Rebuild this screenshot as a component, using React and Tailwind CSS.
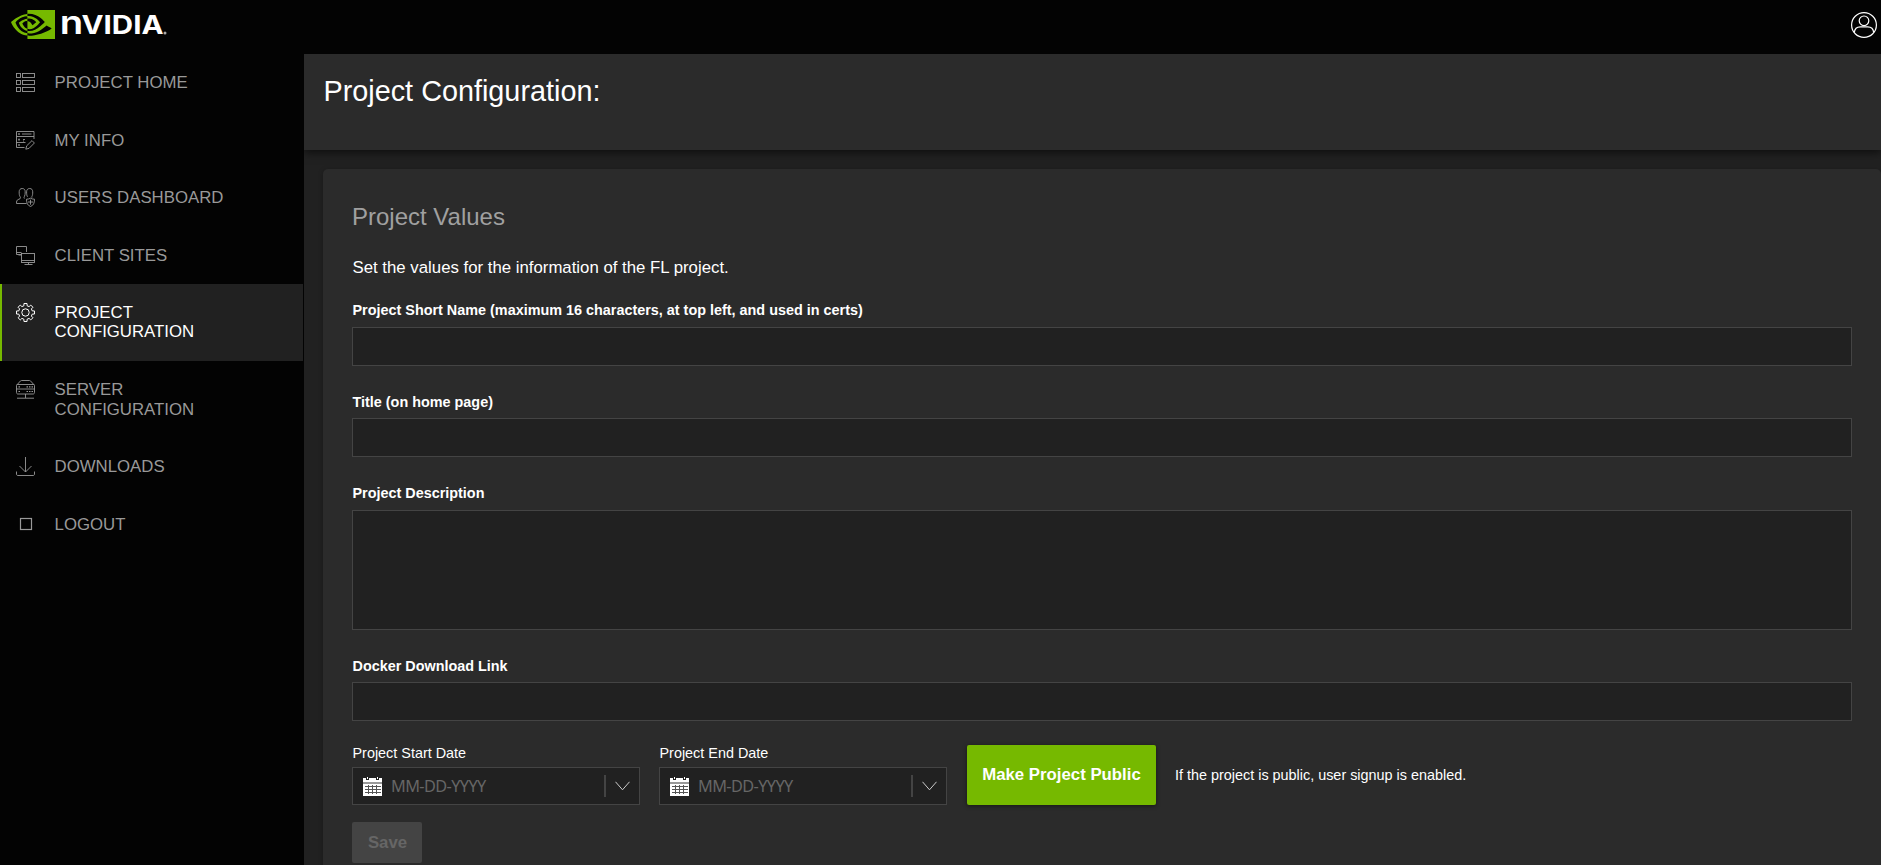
import React from "react";
import { SiNvidia } from "react-icons/si";

const iconBase = {
  width: 19,
  height: 19,
  viewBox: "0 0 19 19",
  fill: "none",
  stroke: "currentColor",
  strokeWidth: 0.9,
  className: "block shrink-0",
};

const HomeIcon = () => (
  <svg {...iconBase}>
    {[0.5, 7.5, 14.5].map((y) => (
      <g key={y}>
        <rect x="0.5" y={y} width="4" height="4" />
        <rect x="6.5" y={y} width="12" height="4" />
      </g>
    ))}
  </svg>
);

const InfoIcon = () => (
  <svg {...iconBase}>
    <path d="M8.5 16.5H.5V.5h17.5v7.500M.5 5.5H18M.5 11.5h9M6 3h9.5M7 8.5h2M7 10h1" />
    <path d="M3 2.2v1.6M3 7.8v1.6M3 13.2v1.6" strokeWidth="1.6" />
    <path d="M9.8 18.2l.9-3.4 5.3-5.2 2.4 2.4-5.3 5.3z" />
  </svg>
);

const UsersIcon = () => (
  <svg {...iconBase}>
    <path d="M10.5 15.5H.5c0-2.200.2-3.300 1.600-3.900l1.900-.9c.8-.5.5-1.400 0-2.100C3.200 7.500 3.200 5.700 3.200 3.800 3.200 1.700 4.300.5 6.200.5s3 1.200 3 3.300c0 1.900-.1 3.500-.8 4.700-.5.9-.5 1.600.1 2.100" />
    <path d="M11.500 8.800c-.8-1.200-.9-3-.9-5C10.600 1.700 11.800.5 13.700.5s3 1.200 3 3.300c0 1.900 0 3.300-.8 4.700v1.200" />
    <path d="M10.500 11.200c1.600 0 2.800-.3 4-1 1.200.7 2.400 1 4 1 0 3.800-.9 6.100-4 7.300-3.100-1.200-4-3.500-4-7.300zM14.500 11.700v5M12 14h5" />
  </svg>
);

const SitesIcon = () => (
  <svg {...iconBase}>
    <path d="M5.500 8.500h-5v-8h10v5.500M.5 6.500h5M2.500 9h3" />
    <rect x="5.500" y="7.500" width="13" height="9" />
    <path d="M5.500 14.500h13M12.500 16.500v2M8.500 18.500h8" />
  </svg>
);

const gearPoints = Array.from({ length: 8 }, (_, i) =>
  [
    [-0.24, 6.9],
    [-0.17, 9.1],
    [0.17, 9.1],
    [0.24, 6.9],
  ].map(([a, r]) => {
    const t = (i * Math.PI) / 4 + a;
    return `${(9.5 + r * Math.sin(t)).toFixed(2)},${(9.5 - r * Math.cos(t)).toFixed(2)}`;
  })
)
  .flat()
  .join(" ");

const GearIcon = () => (
  <svg {...iconBase} strokeWidth={1} strokeLinejoin="round">
    <polygon points={gearPoints} />
    <circle cx="9.500" cy="9.500" r="3.700" />
  </svg>
);

const ServerIcon = () => (
  <svg {...iconBase}>
    <path d="M.8 5L4.500.9c.3-.3.500-.4.900-.4h8.200c.4 0 .6.100.9.400L18.200 5" />
    <path d="M1.500 4.500h16c.6 0 1 .4 1 1v7c0 .8-.5 1.500-1.300 1.500H1.800C1 14 .5 13.300.5 12.500v-7c0-.6.4-1 1-1zM.5 9h18" />
    <path d="M2.500 6.800h1.500M10.500 6.800H12M13 6.800h1.500M15.500 6.800H17M2.500 11.500h1.500M10.500 11.500H12M13 11.500h1.500M15.500 11.500H17" strokeWidth="1.200" />
    <path d="M9.500 14v4M1 18.200h17" />
  </svg>
);

const DownloadIcon = () => (
  <svg {...iconBase}>
    <path d="M9.500 0v15M3.500 9l6 6 6-6M.5 14.500v2.500c0 1 .5 1.500 1.500 1.500h15c1 0 1.500-.5 1.500-1.500v-2.500" />
  </svg>
);

const LogoutIcon = () => (
  <svg {...iconBase}>
    <rect x="4.500" y="3.500" width="11" height="11" strokeWidth="1.200" />
  </svg>
);

const NAV = [
  { label: "PROJECT HOME", Icon: HomeIcon },
  { label: "MY INFO", Icon: InfoIcon },
  { label: "USERS DASHBOARD", Icon: UsersIcon },
  { label: "CLIENT SITES", Icon: SitesIcon },
  { label: "PROJECT CONFIGURATION", Icon: GearIcon, active: true },
  { label: "SERVER CONFIGURATION", Icon: ServerIcon },
  { label: "DOWNLOADS", Icon: DownloadIcon },
  { label: "LOGOUT", Icon: LogoutIcon },
];

function Logo() {
  return (
    <div className="flex items-start pl-[11px] pt-[10px]">
      <SiNvidia viewBox="0 4.063 24 15.874" className="block h-[29px] w-[44px] shrink-0 text-[#76b900]" preserveAspectRatio="none" />
      <svg width="114" height="44" viewBox="0 -10 114 44" className="-mt-[10px] block" fill="#fff" fontFamily="Inter, sans-serif">
        <text x="4.800" y="24.300" fontSize="33" fontWeight="600" textLength="23.500" lengthAdjust="spacingAndGlyphs">n</text>
        <text x="26.500" y="24.300" fontSize="25.800" fontWeight="700" textLength="82" lengthAdjust="spacingAndGlyphs">VIDIA</text>
        <circle cx="110" cy="23" r="1.500" fill="#aaa" />
      </svg>
    </div>
  );
}

function UserIcon() {
  return (
    <svg width="26" height="26" viewBox="0 0 26 26" fill="none" stroke="#fff" strokeWidth="1.200" className="mr-1 mt-3 block">
      <circle cx="13" cy="13" r="12.400" />
      <circle cx="13" cy="8.800" r="4.800" />
      <path d="M3.300 20.500c.3-3.300 2.400-5.700 6-5.700h7.400c3.600 0 5.700 2.400 6 5.700" />
    </svg>
  );
}

function Sidebar() {
  return (
    <nav className="w-[304px] shrink-0 bg-[#030303]">
      {NAV.map(({ label, Icon, active }) => (
        <div
          key={label}
          className={
            active
              ? "mr-px flex border-l-2 border-[#76b900] bg-[#212121] pb-[19.8px] pl-[14px] pt-[18.6px] text-white"
              : "flex border-l-2 border-transparent pb-[19.2px] pl-[14px] pt-[19.2px] text-[#999]"
          }
        >
          <Icon />
          <span className="ml-[19.600px] w-[192px] text-[16.8px] leading-[19.2px]">{label}</span>
        </div>
      ))}
    </nav>
  );
}

function DateField({ label }) {
  return (
    <div className="w-[288px]">
      <div className="h-[22px] pl-[0.500px] text-[14.4px] leading-[17px]">{label}</div>
      <div className="flex h-[38px] items-center border border-[#444] bg-[#212121] pl-[10px]">
        <svg width="19" height="19" viewBox="0 0 19 19" className="block shrink-0" shapeRendering="crispEdges">
          <path d="M0 1h3v2h3V1h7v2h3V1h3v4H0z" fill="#fff" />
          <path d="M4 0h1v2H4zM14 0h1v2h-1z" fill="#fff" />
          <path d="M0 5h19v2H0z" fill="#999" />
          <path d="M0 7h19v12H0z" fill="#fff" />
          <path d="M2 9.500h16M2 12.500h16M2 15.500h16M5.500 8v9M9.500 8v9M13.500 8v9" stroke="#555" />
        </svg>
        <span className="ml-[9px] flex-1 font-['Noto_Sans',sans-serif] text-[16.300px] leading-6 tracking-[-0.600px] text-[#666]">MM-DD-YYYY</span>
        <span className="h-[22px] w-[2px] bg-[#444]" />
        <svg width="15" height="10" viewBox="0 0 15 10" fill="none" stroke="#ccc" className="ml-[9px] mr-[9px] block">
          <path d="M.5 .8l7 8 7-8" />
        </svg>
      </div>
    </div>
  );
}

function Label({ children }) {
  return <span className="block pl-[0.500px] text-[14.4px] font-bold leading-[17px]">{children}</span>;
}

export default function App() {
  return (
    <div className="flex h-[865px] w-full flex-col overflow-hidden bg-[#212121] font-['Liberation_Sans',Arial,sans-serif] text-white">
      <header className="flex h-[54px] shrink-0 items-start justify-between bg-[#030303]">
        <Logo />
        <UserIcon />
      </header>
      <div className="flex min-h-0 flex-1">
        <Sidebar />
        <main className="flex min-w-0 flex-1 flex-col overflow-hidden">
          <div className="h-24 shrink-0 bg-[#2b2b2b] pl-[19.5px] pt-[21px] shadow-[0_3px_8px_rgba(0,0,0,0.55)]">
            <h1 className="text-[28.8px] leading-8">Project Configuration:</h1>
          </div>
          <section className="ml-[19px] mt-[19px] h-[720px] shrink-0 rounded-[5px] bg-[#2b2b2b] pl-[29px] pr-[29px] pt-[34px] shadow-[0_1px_5px_rgba(0,0,0,0.25)]">
            <h2 className="h-[53px] text-2xl leading-7 text-[#a0a0a0]">Project Values</h2>
            <p className="h-[46px] pl-[0.500px] text-[16.8px] leading-6">Set the values for the information of the FL project.</p>
            <div className="h-[25px]"><Label>Project Short Name (maximum 16 characters, at top left, and used in certs)</Label></div>
            <div className="h-[39px] border border-[#444] bg-[#212121]" />
            <div className="mt-[28px] h-[24px]"><Label>Title (on home page)</Label></div>
            <div className="h-[39px] border border-[#444] bg-[#212121]" />
            <div className="mt-[28px] h-[25px]"><Label>Project Description</Label></div>
            <div className="h-[120px] border border-[#444] bg-[#212121]" />
            <div className="mt-[28px] h-[24px]"><Label>Docker Download Link</Label></div>
            <div className="h-[39px] border border-[#444] bg-[#212121]" />
            <div className="mt-[24px] flex items-end">
              <DateField label="Project Start Date" />
              <div className="ml-[19px]"><DateField label="Project End Date" /></div>
              <button className="ml-5 h-[60px] w-[189px] rounded-[2px] bg-[#76b900] text-[16.8px] font-bold shadow-[0_1px_4px_rgba(0,0,0,0.5)]">Make Project Public</button>
              <span className="ml-[19px] h-[60px] text-[14.4px] leading-[60px]">If the project is public, user signup is enabled.</span>
            </div>
            <button className="mt-[17px] block h-[41px] w-[70px] rounded-[2px] bg-[#444] pl-px text-[16.8px] font-bold text-[#666]">Save</button>
          </section>
        </main>
      </div>
    </div>
  );
}
